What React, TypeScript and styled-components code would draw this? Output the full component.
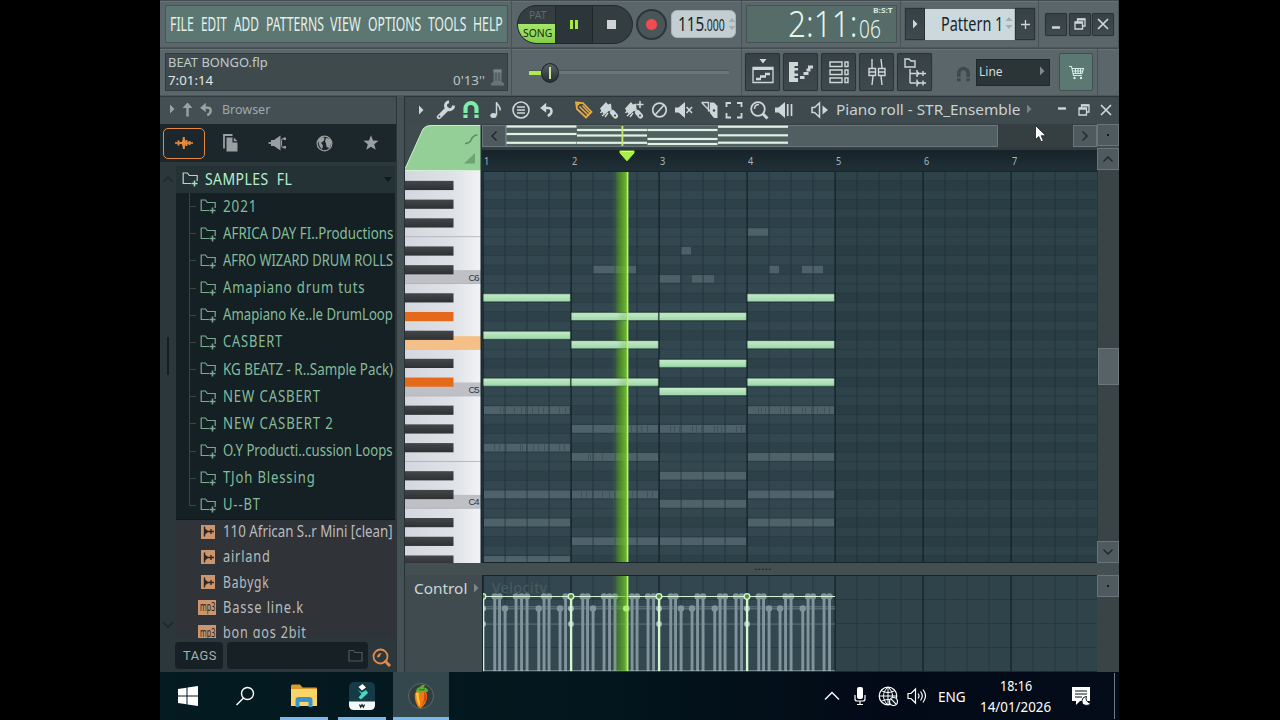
import { useLayoutEffect, useRef, useState } from "react";
import type { ReactNode } from "react";
import styled, { createGlobalStyle, css } from "styled-components";

const ui = `"Noto Sans", "Open Sans", sans-serif`;

/* ---------- fitted text ---------- */

type FitProps = {
  w: number;
  size: number;
  color?: string;
  weight?: number;
  spacing?: number;
  font?: string;
  children: string;
};

// Squeezes a line of text into a given width, the way the condensed skin font looks.
function Fit({ w, size, color = "#d5dcde", weight = 400, spacing = 0, font = ui, children }: FitProps) {
  const ref = useRef<HTMLSpanElement>(null);
  const [scale, setScale] = useState(1);

  useLayoutEffect(() => {
    if (ref.current) setScale(w / (ref.current.offsetWidth - spacing));
  }, [w, spacing, children]);

  return (
    <FitBox $w={w} $size={size} $color={color} $weight={weight} $spacing={spacing} $font={font}>
      <span ref={ref} style={{ transform: `scaleX(${scale})` }}>
        {children}
      </span>
    </FitBox>
  );
}

const FitBox = styled.span<{
  $w: number;
  $size: number;
  $color: string;
  $weight: number;
  $spacing: number;
  $font: string;
}>`
  display: block;
  flex: none;
  width: ${({ $w }) => $w}px;
  height: ${({ $size }) => $size}px;
  font: ${({ $weight, $size, $font }) => `${$weight} ${$size}px/${$size}px ${$font}`};
  letter-spacing: ${({ $spacing }) => $spacing}px;
  color: ${({ $color }) => $color};
  white-space: pre;

  span {
    display: inline-block;
    transform-origin: 0 50%;
  }
`;

/* ---------- icons ---------- */

type IconProps = { w?: number; h?: number; box?: string; color?: string; children: ReactNode };

function Icon({ w = 20, h = 20, box = "0 0 20 20", color = "#ced7d8", children }: IconProps) {
  return (
    <svg width={w} height={h} viewBox={box} fill="none" stroke={color} strokeWidth="1.7" color={color}>
      {children}
    </svg>
  );
}

const Right = ({ color = "#ced7d8" }: { color?: string }) => (
  <Icon w={6} h={10} box="0 0 6 10">
    <path d="M1 0.5L5.5 5L1 9.5z" fill={color} stroke="none" />
  </Icon>
);

const Undo = ({ color = "#ced7d8", size = 18 }: { color?: string; size?: number }) => (
  <Icon w={size} h={size} color={color}>
    <path d="M9 1L1.500 7.500l7.500 6z" fill="currentColor" stroke="none" />
    <path d="M7 7.500h4.500c5.500 0 5.500 7.500 -.5 10" strokeWidth="3.200" />
  </Icon>
);

const Magnet = ({ color, size = 20 }: { color: string; size?: number }) => (
  <Icon w={size} h={size} color={color}>
    <path d="M4.500 13V8.500a5.500 5.500 0 0 1 11 0V13" strokeWidth="4.200" />
    <path d="M2.400 14.500h4.200v3.500H2.400zM13.400 14.500h4.200v3.500h-4.200z" fill="currentColor" stroke="none" />
  </Icon>
);

const Brush = ({ plus }: { plus?: boolean }) => (
  <Icon>
    <path d="M1 8.500L7 2l2 2.500 3-1 .5 5-6 5.500L6 13l-1.500 1z" fill="currentColor" stroke="none" />
    <path d="M10.500 9l1.500 1.500" strokeWidth="3" />
    <path d="M13.500 12.500l3 3.500" strokeWidth="5" strokeLinecap="round" />
    <path d="M1.500 13l2.500-3M3 16l3.500-3M6 17l3-4" strokeWidth="1.400" />
    <circle cx="16" cy="15.500" r="1.100" fill="#3d494d" stroke="none" />
    {plus && <path d="M16 1v7M12.500 4.500h7" strokeWidth="1.500" />}
  </Icon>
);

const Speaker = () => <path d="M1 7.500h3.500L11 2v16l-6.500-5.500H1z" fill="currentColor" stroke="none" />;

const Restore = () => (
  <Icon w={12} h={12} box="0 0 12 12">
    <path d="M3.500 4V1h7.500v7H9M1 4h7.500v7H1z" strokeWidth="1.300" />
    <path d="M1 4.800h7.500M3.500 1.500h7.500" strokeWidth="2" />
  </Icon>
);

const Cross = () => (
  <Icon w={12} h={12} box="0 0 12 12">
    <path d="M1 1l10 10M11 1L1 11" strokeWidth="1.700" />
  </Icon>
);

const Folder = ({ color }: { color: string }) => (
  <Icon w={17} h={17} box="0 0 17 17" color={color}>
    <path d="M9 12.500H1.200V2h4.300l1.800 2.500h7.900v5.500" strokeWidth="1.200" />
    <path d="M12.500 9.500v6M9.500 12.500h6" strokeWidth="1.500" />
  </Icon>
);

const Chevron = ({ d, color = "#1c272b" }: { d: string; color?: string }) => (
  <Icon w={12} h={12} box="0 0 12 12" color={color}>
    <path d={d} strokeWidth="1.400" />
  </Icon>
);

const UP = "M1.500 8.500L6 4l4.500 4.500";
const DOWN = "M1.500 3.500L6 8l4.500-4.500";
const LEFT = "M8.500 1.500L4 6l4.500 4.500";
const RIGHT = "M3.500 1.500L8 6l-4.500 4.500";

const Stepper = () => (
  <Icon w={8} h={14} box="0 0 8 14">
    <path d="M0.500 5L4 1l3.500 4zM0.500 9L4 13l3.500-4z" fill="#a3afb3" stroke="none" />
  </Icon>
);

/* ---------- top toolbar ---------- */

const menus: [string, number][] = [
  ["FILE", 24],
  ["EDIT", 26],
  ["ADD", 25],
  ["PATTERNS", 58],
  ["VIEW", 31],
  ["OPTIONS", 53],
  ["TOOLS", 38],
  ["HELP", 30],
];

function MainBar() {
  return (
    <>
      <BarRow>
        <BarCell $w={352} $pad={5}>
          <MenuBox>
            {menus.map(([name, w]) => (
              <Fit key={name} w={w} size={20} color="#e3f1ec">
                {name}
              </Fit>
            ))}
          </MenuBox>
        </BarCell>
        <BarCell $w={230} $pad={5}>
          <Transport>
            <PatSong>
              <Pat>
                <Fit w={17} size={11} color="#5d6a6e">PAT</Fit>
              </Pat>
              <Song>
                <Fit w={29} size={11.500} color="#1c2a10">SONG</Fit>
              </Song>
            </PatSong>
            <Pause>
              <i />
              <i />
            </Pause>
            <StopCell>
              <i />
            </StopCell>
          </Transport>
          <Record />
          <Tempo>
            <Fit w={26} size={20} color="#1b2326">115</Fit>
            <Fit w={21} size={15.500} color="#1b2326">.000</Fit>
            <Stepper />
          </Tempo>
        </BarCell>
        <BarCell $w={159} $pad={4}>
          <TimeBox>
            <Fit w={69} size={37} weight={300} color="#e3f5ed">2:11:</Fit>
          </TimeBox>
          <TimeRight>
            <Fit w={20} size={7.500} weight={700} color="#d6e8e2">B:S:T</Fit>
            <Fit w={22} size={26} weight={300} color="#e3f5ed">06</Fit>
          </TimeRight>
        </BarCell>
        <BarCell $w={138} $pad={4}>
          <SideButton>
            <Right />
          </SideButton>
          <PatternName>
            <Fit w={62} size={20.500} color="#1c2529">Pattern 1</Fit>
            <Stepper />
          </PatternName>
          <SideButton>
            <Icon w={11} h={11} box="0 0 11 11">
              <path d="M5.500 1v9M1 5.500h9" strokeWidth="1.300" />
            </Icon>
          </SideButton>
        </BarCell>
        <BarCell $w={80} $pad={6}>
          <WinButtons>
            <WinButton>
              <Icon w={12} h={12} box="0 0 12 12">
                <path d="M2 9.500h8" strokeWidth="2.500" />
              </Icon>
            </WinButton>
            <WinButton>
              <Restore />
            </WinButton>
            <WinButton>
              <Cross />
            </WinButton>
          </WinButtons>
        </BarCell>
      </BarRow>
      <BarRow>
        <BarCell $w={352} $pad={5}>
          <InfoBox>
            <Fit w={100} size={12.500} color="#c0cacc">BEAT BONGO.flp</Fit>
            <InfoLine>
              <Fit w={45} size={13} color="#e0e7e8">7:01:14</Fit>
              <InfoTail>
                <Fit w={32} size={13} color="#b9c4c6">0'13''</Fit>
                <Icon w={15} h={19} box="0 0 15 19" color="#717c7f">
                  <path d="M3.500 1.500h8v12l2.500 2v2H1v-2l2.500-2z" fill="#687477" stroke="none" />
                  <path d="M6 4v9M9 4v9" stroke="#465255" strokeWidth="1" />
                  <path d="M3.500 1.500h8v3h-8z" stroke="none" fill="#7a8588" />
                </Icon>
              </InfoTail>
            </InfoLine>
          </InfoBox>
        </BarCell>
        <BarCell $w={230} $pad={17}>
          <Slider>
            <SliderFill />
            <Knob />
          </Slider>
        </BarCell>
        <BarCell $w={356} $pad={3}>
          <ToolButtons>
            <ToolButton>
              <Icon w={24} h={28} box="0 0 24 28">
                <path d="M8.500 1h7L12 5.500z" fill="currentColor" stroke="none" />
                <path d="M2 9.500h20v15H2z" strokeWidth="1.300" />
                <path d="M2 11h20" strokeWidth="2" />
                <path d="M5 21h5M9 18.500h6M14 16h5" strokeWidth="2.400" />
              </Icon>
            </ToolButton>
            <ToolButton>
              <Icon w={26} h={24} box="0 0 26 24">
                <path d="M1 2h9v4H6.500v2H10v2.500H6.500v3H10V16H6.500v2H10v4H1z" fill="currentColor" stroke="none" />
                <path d="M12 17.500h4.500M15.500 13.500h5M20 7h5M18.500 10h4" strokeWidth="3" />
              </Icon>
            </ToolButton>
            <ToolButton>
              <Icon w={22} h={26} box="0 0 22 26">
                <path
                  d="M2 3h12v4.500H2zM2 11h12v4.500H2zM2 19h12v4.500H2zM17 3h3v4.500h-3zM17 11h3v4.500h-3zM17 19h3v4.500h-3z"
                  strokeWidth="1.400"
                />
              </Icon>
            </ToolButton>
            <ToolButton>
              <Icon w={20} h={28} box="0 0 20 28">
                <path d="M5 1v9M6 18l-1 9M14 1l1 9M14 18l1 9M2 10.500h6.500v7H2zM11.500 10.500H18v7h-6.500z" strokeWidth="1.400" />
                <path d="M2 14h6.500M11.500 14H18" strokeWidth="1.700" />
              </Icon>
            </ToolButton>
            <ToolButton>
              <Icon w={26} h={30} box="0 0 26 30">
                <path d="M3 2h4l2 2h4v6H3zM8 12v14M8 16.500h6M8 26h6" strokeWidth="1.400" />
                <path d="M15 13v7M15 16.500h9M15 22.500v7M15 26h9M21 14v5M21 23.500v5" strokeWidth="1.400" />
                <path d="M15 14l3 2.500-3 2.500zM15 23.500l3 2.500-3 2.500z" fill="currentColor" stroke="none" />
              </Icon>
            </ToolButton>
          </ToolButtons>
          <Snap>
            <Magnet color="#3f494c" size={17} />
            <SnapSelect>
              <Fit w={24} size={13}>Line</Fit>
              <Right color="#7f8a8d" />
            </SnapSelect>
          </Snap>
          <CartButton>
            <Icon w={17} h={17} box="0 0 17 17" color="#d6ebe4">
              <path d="M1 2.500h2.500l2 9h8.500M4 4.500h11.500l-1.500 5H5M7.500 4.500v5M10 4.500v5M12.500 4.500v5M4.500 7h10" strokeWidth="1.100" />
              <circle cx="6.500" cy="14" r="1.200" fill="currentColor" stroke="none" />
              <circle cx="13" cy="14" r="1.200" fill="currentColor" stroke="none" />
            </Icon>
          </CartButton>
        </BarCell>
      </BarRow>
    </>
  );
}

/* ---------- browser ---------- */

const folders: [string, number, number?][] = [
  ["2021", 33, 1],
  ["AFRICA DAY FI..Productions", 170],
  ["AFRO WIZARD DRUM ROLLS", 170],
  ["Amapiano drum tuts", 142, 1],
  ["Amapiano Ke..le DrumLoop", 170],
  ["CASBERT", 59, 1],
  ["KG BEATZ - R..Sample Pack)", 170],
  ["NEW CASBERT", 97, 1],
  ["NEW CASBERT 2", 110, 1],
  ["O.Y Producti..cussion Loops", 170],
  ["TJoh Blessing", 92, 1],
  ["U--BT", 37, 1],
];

const files: [string, number, boolean][] = [
  ["110 African S..r Mini [clean]", 170, false],
  ["airland", 47, false],
  ["Babygk", 46, false],
  ["Basse line.k", 80, true],
  ["bon gos 2bit", 83, true],
];

function Browser() {
  return (
    <BrowserPane>
      <BrowserHead>
        <Right color="#98a3a4" />
        <Icon w={11} h={15} box="0 0 11 15" color="#98a3a4">
          <path d="M5.500 0.500L10.500 6H0.500z" fill="currentColor" stroke="none" />
          <path d="M5.500 5v9.500" strokeWidth="2.400" />
        </Icon>
        <Undo color="#98a3a4" size={15} />
        <Fit w={48} size={13} color="#9eaaab">Browser</Fit>
      </BrowserHead>
      <BrowserTabs>
        <BrowserTab $on>
          <Icon w={18} h={14} box="0 0 18 14" color="#e6883f">
            <path d="M0 7h18" strokeWidth="1.600" />
            <path d="M3.500 4.500v5M6 6v2M8.800 1v12M11.500 4v6M14.500 5v4" strokeWidth="2" />
            <path d="M8.800 1l2.500 6-2.500 6-2.500-6z" fill="currentColor" stroke="none" />
          </Icon>
        </BrowserTab>
        <BrowserTab>
          <Icon w={15} h={18} box="0 0 15 18" color="#9a9fa1">
            <path d="M1 14.500V1h8.500" strokeWidth="1.800" />
            <path d="M3.500 3.500h6V8.500h5V17.500h-11z" fill="currentColor" stroke="none" />
            <path d="M10.800 3.500l3.700 3.700h-3.700z" fill="currentColor" stroke="none" />
          </Icon>
        </BrowserTab>
        <BrowserTab>
          <Icon w={19} h={16} box="0 0 19 16" color="#9a9fa1">
            <path d="M3 5h3l6.500-4.500v15L6 11H3z" fill="currentColor" stroke="none" />
            <path d="M0.500 8h5" strokeWidth="1.800" />
            <path d="M17 3.500h-1.500q-2 0-2 2v5q0 2 2 2h1.500" strokeWidth="1" />
            <path d="M15.500 2.500h2.500v2.500h-2.500zM15.500 11h2.500v2.500h-2.500z" fill="currentColor" stroke="none" />
          </Icon>
        </BrowserTab>
        <BrowserTab>
          <Icon w={17} h={17} box="0 0 17 17" color="#9a9fa1">
            <circle cx="8.500" cy="8.500" r="7.300" strokeWidth="1.300" />
            <path d="M2 5l3-3 3.500.5-.5 3L5 8l2 2.500-1 4L3.500 11zM10 3l4.500 1 1 4-2 5-3-1-.5-3.500L9 6z" fill="currentColor" stroke="none" />
          </Icon>
        </BrowserTab>
        <BrowserTab>
          <Icon w={16} h={16} box="0 0 16 16">
            <path
              d="M8 0.300l2 5.300 5.600.2-4.400 3.500 1.500 5.500L8 11.700l-4.700 3.100 1.500-5.500L.4 5.800 6 5.600z"
              fill="#9a9fa1"
              stroke="none"
            />
          </Icon>
        </BrowserTab>
      </BrowserTabs>
      <BrowserBody>
        <Gutter>
          <Chevron d={UP} />
          <GutterMark />
          <Chevron d={DOWN} />
        </Gutter>
        <Tree>
          <RootRow>
            <Folder color="#a9dfc0" />
            <Fit w={87} size={16} color="#b5efce" spacing={0.500}>{"SAMPLES  FL"}</Fit>
            <Icon w={8} h={5} box="0 0 8 5">
              <path d="M0 0h8L4 5z" fill="#10191c" stroke="none" />
            </Icon>
          </RootRow>
          <FolderList>
            {folders.map(([name, w, spacing]) => (
              <FolderRow key={name}>
                <Folder color="#7bab8f" />
                <Fit w={w} size={15.500} color="#86bb9c" spacing={spacing}>
                  {name}
                </Fit>
              </FolderRow>
            ))}
          </FolderList>
          <FileList>
            {files.map(([name, w, mp3]) => (
              <FileRow key={name}>
                {mp3 ? (
                  <Mp3>
                    <Fit w={15} size={12} color="#2b2320">mp3</Fit>
                  </Mp3>
                ) : (
                  <WavIcon>
                    <Icon w={13} h={13} box="0 0 13 13" color="#33261f">
                      <path d="M2.500 1.500v10M2.500 6.500H12M9 4v5" strokeWidth="1.400" />
                      <path d="M2.500 3L6.500 6.500 2.500 10" fill="currentColor" stroke="none" />
                    </Icon>
                  </WavIcon>
                )}
                <Fit w={w} size={15.500} color="#b9bcbe" spacing={w < 170 ? 1 : 0}>
                  {name}
                </Fit>
              </FileRow>
            ))}
          </FileList>
        </Tree>
      </BrowserBody>
      <BrowserFoot>
        <TagsButton>
          <Fit w={33} size={13} color="#a7b1b2" font={`Roboto, sans-serif`} spacing={0.500}>TAGS</Fit>
        </TagsButton>
        <TagSearch>
          <Icon w={15} h={13} box="0 0 15 13" color="#4c585b">
            <path d="M1 1.500h4.500l1.500 2h7V12H1z" strokeWidth="1.200" />
          </Icon>
        </TagSearch>
        <Icon w={19} h={19} box="0 0 19 19" color="#e08a4b">
          <circle cx="8.500" cy="8.500" r="7" strokeWidth="1.800" />
          <path d="M12.500 12.500l5.500 5.500" strokeWidth="3" />
          <path d="M5 9.500C5 6.500 7 5 9.500 5L7.500 9z" fill="currentColor" stroke="none" />
        </Icon>
      </BrowserFoot>
    </BrowserPane>
  );
}

/* ---------- piano roll ---------- */

const ROW = 9.365;
const C5 = 391.500;
const BAR = 88;
const X0 = 483;
const PLAY = 627.800;
const BLACK = [1, 3, 6, 8, 10];

// Semitones are counted from C5; the y value is the centre of the row.
const rowY = (n: number) => C5 - n * ROW;
const barX = (bar: number) => X0 + bar * BAR;

const rows = Array.from({ length: 43 }, (_, i) => i - 19);
const isBlack = (n: number) => BLACK.includes((n + 48) % 12);

const chords = [
  [10, 6, 1],
  [8, 5, 1],
  [8, 3, 0],
  [10, 5, 1],
];

const ghosts = [
  [-2, -6, -11, -14, -18],
  [-4, -7, -11, -16],
  [-4, -9, -12, -16],
  [-2, -7, -11, -14],
];

const strays: [number, number, number][] = [
  [593, 43, 13],
  [659, 21, 12],
  [681, 10, 15],
  [692, 22, 12],
  [748, 20, 17],
  [769, 10, 13],
  [802, 21, 13],
];

// rows whose ghost notes are made of short hits: bar, semitone, tick offsets
const hits: [number, number, number[]][] = [
  [0, -2, [17, 20, 31, 38, 42, 49, 55, 60, 66, 76, 82, 86]],
  [0, -6, [11, 16, 23, 37, 39, 43, 50, 55, 61, 65, 76, 81]],
  [1, -4, [54, 60, 70, 76]],
  [1, -7, [17, 19, 31]],
  [1, -11, [10, 15, 21, 31, 38, 43, 55, 61, 76, 81]],
  [2, -4, [11, 15, 20, 33, 37, 42, 55, 58, 62, 77, 82, 86]],
  [3, -2, [11, 14, 18, 33, 37, 41, 55, 58, 64, 70, 77, 82]],
];

function NoteGrid() {
  return (
    <svg width="615" height="392" viewBox="482 171 615 392">
      <defs>
        <linearGradient id="glow">
          <stop offset="0" stopColor="#5fb31c" stopOpacity="0" />
          <stop offset="0.5" stopColor="#5fb31c" stopOpacity="0.550" />
          <stop offset="1" stopColor="#78cc2c" stopOpacity="0.900" />
        </linearGradient>
        <linearGradient id="note" x2="0" y2="1">
          <stop offset="0" stopColor="#c6ecca" />
          <stop offset="1" stopColor="#9bd6a8" />
        </linearGradient>
      </defs>
      <rect x="482" y="171" width="615" height="392" fill="#32474f" />
      {rows.map((n) => (
        <g key={n}>
          {isBlack(n) && <rect x="482" y={rowY(n) - ROW / 2} width="615" height={ROW} fill="#2d4149" />}
          <rect x="482" y={rowY(n) + ROW / 2 - 0.500} width="615" height="0.800" fill="#2a3d45" />
        </g>
      ))}
      <rect x="835" y="171" width="262" height="392" fill="#1b2f38" opacity="0.180" />
      {ghosts.map((bar, b) =>
        bar.map((n) => (
          <rect key={`${b}${n}`} x={barX(b) + 1} y={rowY(n) - 4} width="86" height="7.800" fill="#4e6269" />
        ))
      )}
      {strays.map(([x, w, n]) => (
        <rect key={x} x={x} y={rowY(n) - 4} width={w} height="7.500" fill="#4d6168" />
      ))}
      {hits.map(([b, n, ticks]) =>
        ticks.map((t) => <rect key={`${b}${n}${t}`} x={barX(b) + t} y={rowY(n) - 3} width="1" height="6" fill="#3e525a" />)
      )}
      {Array.from({ length: 28 }, (_, i) => (
        <rect
          key={i}
          x={X0 + i * 22 - 0.500}
          y="171"
          width="1.200"
          height="392"
          fill={i % 4 ? "#1f3138" : "#0f1c21"}
          opacity={i % 4 ? 0.600 : 0.900}
        />
      ))}
      <rect x="612" y="171" width="16" height="392" fill="url(#glow)" />
      {chords.map((bar, b) =>
        bar.map((n) => (
          <rect
            key={`${b}${n}`}
            x={barX(b) + 0.200}
            y={rowY(n) - 4}
            width="87.200"
            height="8"
            rx="0.800"
            fill="url(#note)"
            stroke="#23382f"
            strokeWidth="0.500"
          />
        ))
      )}
      <rect x="617" y="171" width="10" height="392" fill="url(#glow)" opacity="0.350" />
      <rect x={PLAY - 1} y="171" width="1.600" height="392" fill="#b9f763" />
      <path d="M482 171.500h615M482 562.500h615" stroke="#17252a" />
    </svg>
  );
}

const sounding: Record<number, string> = { 8: "#e5691b", 1: "#e5691b" };

function Keyboard() {
  return (
    <svg width="77" height="392" viewBox="405 171 77 392">
      <defs>
        <linearGradient id="white">
          <stop offset="0" stopColor="#d4d8de" />
          <stop offset="0.65" stopColor="#dfe2e7" />
          <stop offset="1" stopColor="#f2f3f6" />
        </linearGradient>
        <linearGradient id="black" x2="0" y2="1">
          <stop offset="0" stopColor="#44464a" />
          <stop offset="1" stopColor="#2e3033" />
        </linearGradient>
      </defs>
      <rect x="405" y="171" width="76" height="392" fill="url(#white)" />
      {[12, 0, -12].map((n) => (
        <g key={n}>
          <rect x="405" y={rowY(n) - 9} width="76" height="13.200" fill="#bfc0c5" />
          <path d={`M405 ${rowY(n) + 4.400}h76M405 ${rowY(n - 7) + 4.400}h76`} stroke="#a9acb3" strokeWidth="0.800" />
        </g>
      ))}
      <path d={`M405 ${rowY(17) + 4.400}h76`} stroke="#a9acb3" strokeWidth="0.800" />
      <rect x="405" y={rowY(5) - 8.500} width="76" height="13.500" fill="#f4c088" />
      {rows.filter(isBlack).map((n) => (
        <rect key={n} x="405" y={rowY(n) - 4.600} width="48.500" height="9.200" fill={sounding[n] ?? "url(#black)"} />
      ))}
      {[12, 0, -12].map((n, i) => (
        <text key={n} x="468.500" y={rowY(n) + 1.600} fontFamily="Liberation Sans, sans-serif" fontSize="9.500" textLength="11" fill="#33373b">
          {["C6", "C5", "C4"][i]}
        </text>
      ))}
      <rect x="480.500" y="171" width="1.500" height="392" fill="#1d282b" />
    </svg>
  );
}

const stems = [11.700, 16.500, 22, 33, 38.500, 44, 55.700, 61, 66, 77, 82.500];
const soft = [
  [22, 55.700, 77],
  [22, 55.700],
  [22, 33, 55.700],
  [22, 33, 55.700],
];

function Velocity() {
  return (
    <svg width="615" height="97" viewBox="482 575 615 97">
      <rect x="482" y="575" width="615" height="97" fill="#32474f" />
      <rect x="835" y="575" width="262" height="97" fill="#2f434b" />
      <path d="M482 599.500h615M482 623.500h615M482 647.500h615" stroke="#243840" strokeWidth="0.800" />
      {Array.from({ length: 28 }, (_, i) => (
        <rect key={i} x={X0 + i * 22 - 0.500} y="575" width="1.100" height="97" fill={i % 4 ? "#22343b" : "#0f1c21"} opacity={i % 4 ? 0.600 : 1} />
      ))}
      <text x="492" y="593" fontFamily="Noto Sans, sans-serif" fontSize="14" textLength="55" fill="#4a5d64">
        Velocity
      </text>
      <path d="M483 606.800h352M483 608.800h352M483 624h352" stroke="#74898f" strokeWidth="0.800" />
      {soft.map((low, b) =>
        stems.map((s) => {
          const y = low.includes(s) ? 608.500 : 596.500;
          return (
            <g key={`${b}-${s}`} fill="#80959b">
              <rect x={barX(b) + s - 1.400} y={y} width="2.900" height="75.500" />
              <circle cx={barX(b) + s} cy={y} r="3.200" />
            </g>
          );
        })
      )}
      <rect x="482" y="670.500" width="353" height="1" fill="#a9bcbc" />
      <path d="M483 596.500h352" stroke="#d6f5d6" strokeWidth="1.200" />
      <rect x="612" y="575" width="16" height="97" fill="url(#glow)" />
      {[0, 1, 2, 3].map((b) => (
        <g key={b}>
          <circle cx={barX(b)} cy="608.500" r="3" fill="#9db3b3" />
          <circle cx={barX(b)} cy="624" r="3" fill="#9db3b3" />
          <rect x={barX(b) - 1.100} y="597" width="2.400" height="75" fill="#d3f7d2" />
          <circle cx={barX(b)} cy="596.500" r="2.800" fill="#50903f" stroke="#d6f5d6" strokeWidth="1.300" />
        </g>
      ))}
      <circle cx="626" cy="608.500" r="3" fill="#a8f07a" />
      <rect x={PLAY - 1} y="575" width="1.600" height="97" fill="#b9f763" />
      <path d="M482 575.500h615M482.500 575v97M482 671.700h615" stroke="#17252a" />
    </svg>
  );
}

// strip above the ruler: one list of line heights for each bar
const strip = [
  [126.500, 134, 142.800],
  [130, 135.500, 142.800],
  [130, 139, 144],
  [126.700, 135.300, 142.700],
];

function Overview() {
  return (
    <svg width="492" height="22" viewBox="506 125 492 22">
      <rect x="506" y="125" width="492" height="22" fill="#515f63" />
      <rect x="506" y="125" width="282" height="22" fill="#50645f" opacity="0.600" />
      <rect x="506.500" y="125.500" width="491" height="21" fill="none" stroke="#707d80" strokeWidth="0.800" />
      {strip.map((lines, b) =>
        lines.map((y) => <rect key={`${b}${y}`} x={506.500 + b * 70.500} y={y - 1.100} width="70" height="2.200" fill="#e2f1e4" />)
      )}
      <rect x="621.500" y="126" width="1.800" height="20" fill="#c9ea68" />
    </svg>
  );
}

function RollTools() {
  return (
    <RollBar>
      <Slot><Right /></Slot>
      <Slot>
        <Icon>
          <path d="M3 17L11 9" strokeWidth="4.400" strokeLinecap="round" />
          <path d="M17.500 5.500a4 4 0 1 1 -4.500 -3.700" strokeWidth="3" />
          <circle cx="3.500" cy="16.500" r="0.900" fill="#3d494d" stroke="none" />
        </Icon>
      </Slot>
      <Slot><Magnet color="#7fecaa" /></Slot>
      <Slot>
        <Icon>
          <path d="M10.500 15V2c.5 3.500 4.500 4 3.500 8.500" strokeWidth="1.500" />
          <ellipse cx="7.500" cy="15.500" rx="3.200" ry="2.500" fill="currentColor" stroke="none" />
        </Icon>
      </Slot>
      <Slot $w={26}>
        <Icon>
          <circle cx="10" cy="10" r="8" strokeWidth="1.600" />
          <path d="M6 7h8M6 10h8M6 13h8" strokeWidth="1.500" />
        </Icon>
      </Slot>
      <Slot><Undo size={16} /></Slot>
      <Slot $gap={12}>
        <Icon color="#e9a83e">
          <path d="M2 2.500l7 0.500 8.500 9-5.500 5.500L3 9z" strokeWidth="1.800" />
          <path d="M5.500 6.500l8.500 8.500M8.500 5.500l7 7.500" strokeWidth="1.500" />
          <path d="M2 2.500h5L2.500 7.500z" fill="currentColor" stroke="none" />
        </Icon>
      </Slot>
      <Slot><Brush /></Slot>
      <Slot><Brush plus /></Slot>
      <Slot>
        <Icon>
          <circle cx="10.500" cy="10" r="6.800" />
          <path d="M6 15L15 5" />
        </Icon>
      </Slot>
      <Slot $w={26}>
        <Icon>
          <Speaker />
          <path d="M12.500 7l5.500 6M18 7l-5.500 6" strokeWidth="1.500" />
        </Icon>
      </Slot>
      <Slot>
        <Icon>
          <path d="M1.500 2.500h7v9M2 3l10 10" strokeWidth="1.400" />
          <path d="M10 2.500h4l3.500 3.500v12h-3.500L10 13z" fill="currentColor" stroke="none" />
          <circle cx="14" cy="10.500" r="1.200" fill="#3d494d" stroke="none" />
        </Icon>
      </Slot>
      <Slot $w={24}>
        <Icon>
          <path d="M2.500 7V3H7M13 3h4.500v4M17.500 13v4.500H13M7 17.500H2.500V13" strokeWidth="1.800" />
        </Icon>
      </Slot>
      <Slot>
        <Icon>
          <circle cx="9" cy="9" r="6.800" strokeWidth="1.800" />
          <path d="M13.500 13.500l5 5" strokeWidth="3" />
          <path d="M5.500 9c0-3 2-4.500 4.500-4.500" strokeWidth="1.500" />
        </Icon>
      </Slot>
      <Slot>
        <Icon>
          <Speaker />
          <path d="M13.700 4v12M17.500 4v12" strokeWidth="1.700" />
        </Icon>
      </Slot>
      <Slot $gap={11}>
        <Icon>
          <path d="M2 7.500h2.500L9.500 3v14l-5-4.500H2z" strokeWidth="1.500" />
          <path d="M12.500 5.500L18 10l-5.500 4.500z" fill="currentColor" stroke="none" />
        </Icon>
      </Slot>
      <RollTitle>
        <Fit w={184} size={14.500} color="#c9d2d3">Piano roll - STR_Ensemble</Fit>
        <Right color="#778386" />
      </RollTitle>
      <RollWin>
        <Icon w={12} h={12} box="0 0 12 12">
          <path d="M2 4.500h8" strokeWidth="2.400" />
        </Icon>
        <Restore />
        <Cross />
      </RollWin>
    </RollBar>
  );
}

function PianoRoll() {
  return (
    <Roll>
      <RollTools />
      <RollBody>
        <Corner>
          <svg width="77" height="47" viewBox="405 124 77 47">
            <path d="M405 171v-3L423 129q3-4 8-4h50v46z" fill="#93cf96" />
            <path d="M405.500 168L423 129q3-3.500 8-3.500h50" stroke="#c4ebc5" fill="none" />
            <path d="M405 170.500h76" stroke="#d5efd5" />
            <path d="M465 143.500c9 0 4-8.500 12.500-8.500" stroke="#5c8e60" strokeWidth="1.600" fill="none" />
            <path d="M464 163.500h11V153z" fill="#6fa274" />
            <rect x="480.500" y="125" width="1.500" height="46" fill="#24312f" />
          </svg>
        </Corner>
        <HScroll>
          <ScrollButton $w={24}><Chevron d={LEFT} /></ScrollButton>
          <Overview />
          <ScrollTrack />
          <ScrollButton $w={24}><Chevron d={RIGHT} /></ScrollButton>
        </HScroll>
        <ScrollButton $w={22}><Dot /></ScrollButton>
        <Ruler>
          {["1", "2", "3", "4", "5", "6", "7"].map((n) => (
            <Tick key={n}>
              <Fit w={5} size={11} color="#a9b6b8">{n}</Fit>
            </Tick>
          ))}
          <PlayMarker width="18" height="14" viewBox="0 0 18 14">
            <path d="M1 1h16v3l-8 9-8-9z" fill="#a8ef49" stroke="#1b2a12" />
            <path d="M3 2.500h12" stroke="#d6ff8f" />
          </PlayMarker>
        </Ruler>
        <VScroll>
          <ScrollButton $w={22}><Chevron d={UP} /></ScrollButton>
          <VTrack>
            <VThumb />
          </VTrack>
          <ScrollButton $w={22}><Chevron d={DOWN} /></ScrollButton>
        </VScroll>
        <Keyboard />
        <NoteGrid />
        <Splitter>
          <Fit w={17} size={8} color="#1f2b2e" weight={700}>.....</Fit>
        </Splitter>
        <ControlCell>
          <Fit w={53} size={14.500} color="#cdd6d7">Control</Fit>
          <Right color="#7c888a" />
        </ControlCell>
        <Velocity />
        <ControlScroll>
          <ScrollButton $w={22}><Dot /></ScrollButton>
        </ControlScroll>
      </RollBody>
    </Roll>
  );
}

/* ---------- taskbar ---------- */

function Taskbar() {
  return (
    <TaskRow>
      <TaskItem $w={56}>
        <svg width="20" height="20" viewBox="0 0 20 20" fill="#fff">
          <path d="M0 3l8.500-1.200v7.700H0zM9.500 1.600L20 0v9.500H9.500zM0 10.500h8.500v7.700L0 17zM9.500 10.500H20V20L9.500 18.400z" />
        </svg>
      </TaskItem>
      <TaskItem $w={57}>
        <Icon color="#fff">
          <circle cx="12.500" cy="7.500" r="6" strokeWidth="1.400" />
          <path d="M8.500 12L1.500 19" strokeWidth="1.400" />
        </Icon>
      </TaskItem>
      <TaskItem $w={62} $line={48}>
        <svg width="26" height="24" viewBox="0 0 26 24">
          <path d="M0 2q0-1.500 1.500-1.500H9l2.500 3H25q1 0 1 1V21H0z" fill="#d89a2b" />
          <path d="M0 5h26v17H0z" fill="#f9d568" />
          <path d="M4.500 23v-7q0-3 3-3h11q3 0 3 3v7h-4v-5h-9v5z" fill="#3a93c9" />
        </svg>
      </TaskItem>
      <TaskItem $w={54} $line={48}>
        <svg width="26" height="28" viewBox="0 0 26 28">
          <rect width="26" height="27" rx="5" fill="#153a48" />
          <path d="M0 19.500h26V23q0 5-5 5H5q-5 0-5-5z" fill="#f4f7f8" />
          <path d="M9.500 5l4-3L17 5.500l-4 3z" fill="#fff" />
          <path d="M9 8l4 2.500L17 8l2 3-7 6.500-2.500-2 3-3.500z" fill="#41dcc0" />
          <path d="M10.500 22.500l1.200 2.500L13 22.800l1.300 2.200 1.200-2.500" stroke="#15262e" strokeWidth="1.300" fill="none" />
        </svg>
      </TaskItem>
      <TaskItem $w={56} $line={56} $gap={4} $active>
        <svg width="28" height="28" viewBox="0 0 28 28">
          <circle cx="14" cy="14" r="12.500" fill="#343d3e" stroke="#5d686a" />
          <path d="M8 11q3-3 8-2 5 1 4 7-1 6-6 10-2 1-4-3-3-6-2-12z" fill="#f07a14" />
          <path d="M9 11q0 7 3 13 1.500 0 1-4-2-6-1-10z" fill="#fcc63c" />
          <path d="M17 10q4 3 2 8l-4 6q3-7 2-14z" fill="#d6430f" />
          <path d="M9 10q0-4 4-5 2-3 5-2l-1.500 2.500q4.500 0 4.500 4l-3 1-2-2-3 2.500z" fill="#5fae33" />
          <path d="M12 7.500l3 .5 3-1" stroke="#2e6d1c" fill="none" />
        </svg>
      </TaskItem>
      <Tray>
        <Icon w={16} h={16} box="0 0 16 16" color="#fff">
          <path d="M1 11.500L8 4.500l7 7" strokeWidth="1.300" />
        </Icon>
        <Icon w={12} h={20} box="0 0 12 20" color="#fff">
          <rect x="3" y="1" width="6" height="12" rx="2" fill="currentColor" stroke="none" />
          <path d="M1 9v4q0 2 2 2h6q2 0 2-2V9M6 15v4M3 18.500h6" strokeWidth="1.200" />
        </Icon>
        <Icon color="#fff">
          <circle cx="10" cy="10" r="8.800" strokeWidth="1.200" />
          <path d="M10 1v18M1 10h18M3 4.500q7 4 14 0M3 15.500q7-4 14 0M10 1C4 6 4 14 10 19M10 1c6 5 6 13 0 18" strokeWidth="1" />
          <circle cx="15.500" cy="15.500" r="4" fill="#04151c" strokeWidth="1.200" />
          <path d="M12.700 12.700l5.600 5.600" strokeWidth="1.200" />
        </Icon>
        <Icon color="#fff">
          <path d="M1 7.500h3L8.500 3v14L4 12.500H1z" strokeWidth="1.200" />
          <path d="M11 7.500q2 2.500 0 5M13.500 5.500q3.500 4.500 0 9M16 3.500q5 6.500 0 13" strokeWidth="1.200" />
        </Icon>
        <Fit w={28} size={14.500} color="#fff">ENG</Fit>
        <Clock>
          <Fit w={32} size={14.500} color="#fff">18:16</Fit>
          <Fit w={71} size={14.500} color="#fff">14/01/2026</Fit>
        </Clock>
        <Icon w={20} h={21} box="0 0 20 21" color="#fff">
          <path d="M1 1h18v14H9l-4 4v-4H1z" fill="currentColor" stroke="none" />
          <path d="M4 5h12M4 8h12M4 11h7" stroke="#05131c" strokeWidth="1.100" />
          <path d="M15.500 10.500a4.500 4.500 0 1 0 4 6.500a4.500 4.500 0 0 1 -4 -6.500z" stroke="#05131c" strokeWidth="1" fill="#fff" />
        </Icon>
        <ShowDesktop />
      </Tray>
    </TaskRow>
  );
}

export default function App() {
  return (
    <Stage>
      <Reset />
      <Screen>
        <MainBar />
        <Work>
          <Browser />
          <Divider />
          <PianoRoll />
        </Work>
        <Taskbar />
        <Cursor width="12" height="18" viewBox="0 0 12 18">
          <path d="M0.500 0.500v14l3.300-3 2.200 5.200 2.400-1-2.200-5h4.600z" fill="#fff" stroke="#1a2022" strokeWidth="0.800" />
        </Cursor>
      </Screen>
    </Stage>
  );
}

/* ---------- styles ---------- */

const Reset = createGlobalStyle`
  * { box-sizing: border-box; }
  body { margin: 0; background: #000; overflow: hidden; }
  svg { display: block; flex: none; }
`;

const Stage = styled.div`
  width: 1280px;
  height: 720px;
  padding-left: 160px;
  background: #000;
  font-family: ${ui};
`;

const Screen = styled.div`
  position: relative;
  display: flex;
  flex-direction: column;
  width: 959px;
  height: 720px;
  background: #3f4b4e;
`;

const BarRow = styled.div`
  display: flex;
  height: 48px;
  background: #5a6669;
  border-top: 1px solid #434e51;
  border-bottom: 1px solid #4b5659;
  box-shadow: inset 0 1px #667275;
`;

const BarCell = styled.div<{ $w: number; $pad: number }>`
  display: flex;
  align-items: center;
  flex: none;
  width: ${({ $w }) => $w}px;
  padding-left: ${({ $pad }) => $pad}px;
  border-right: 1px solid #475255;
`;

const MenuBox = styled.div`
  display: flex;
  align-items: center;
  justify-content: space-between;
  width: 343px;
  height: 38px;
  padding: 0 4px 0 4px;
  background: #5c7772;
  border: 1px solid #465855;
`;

const recess = css`
  background: linear-gradient(#39444880, #48545880), #353f43;
  border: 1px solid #2a3437;
  box-shadow: 0 0 1px #2a3437;
`;

const Transport = styled.div`
  display: flex;
  flex: none;
  width: 116px;
  height: 39px;
  overflow: hidden;
  border: 1px solid #20292b;
  border-radius: 20px;
  background: #343e41;
`;

const PatSong = styled.div`
  width: 38px;
  border-right: 1px solid #1f282a;
`;

const Pat = styled.div`
  display: flex;
  align-items: center;
  justify-content: center;
  height: 18px;
  padding-left: 2px;
`;

const Song = styled(Pat)`
  height: 19px;
  background: linear-gradient(#a4e56b, #86cf45);
`;

const Pause = styled.div`
  display: flex;
  align-items: center;
  justify-content: center;
  gap: 2px;
  width: 37px;
  background: #2c3538;
  border-right: 1px solid #1f282a;

  i {
    width: 3px;
    height: 9px;
    background: #a5ea3f;
  }
`;

const StopCell = styled.div`
  display: flex;
  align-items: center;
  justify-content: center;
  width: 37px;

  i {
    width: 9px;
    height: 9px;
    background: #ced4d8;
  }
`;

const Record = styled.div`
  flex: none;
  width: 31px;
  height: 31px;
  margin-left: 3px;
  border-radius: 50%;
  border: 2px solid #2c3639;
  background: radial-gradient(circle, #f04b50 0 5px, #4a5558 6px);
`;

const Tempo = styled.div`
  display: flex;
  align-items: center;
  flex: none;
  width: 65px;
  height: 28px;
  margin-left: 4px;
  padding-left: 6px;
  background: #c3ced2;
  border: 1px solid #aab5b9;
  border-radius: 6px;

  span + span {
    margin: 3px 3px 0 0;
  }
`;

const TimeBox = styled.div`
  display: flex;
  align-items: center;
  flex: none;
  width: 113px;
  height: 38px;
  padding: 0 0 3px 41px;
  background: #566c68;
  border: 1px solid #43534f;
  border-right: 0;
`;

const TimeRight = styled.div`
  display: flex;
  flex-direction: column;
  align-items: flex-end;
  flex: none;
  width: 38px;
  height: 38px;
  padding: 1px 3px 0 0;
  background: #566c68;
  border: 1px solid #43534f;
  border-left: 0;

  > span + span {
    margin: 0 12px 0 0;
  }
`;

const SideButton = styled.div`
  display: flex;
  align-items: center;
  justify-content: center;
  flex: none;
  width: 20px;
  height: 32px;
  ${recess}
`;

const PatternName = styled.div`
  display: flex;
  align-items: center;
  justify-content: flex-end;
  gap: 2px;
  flex: none;
  width: 90px;
  height: 31px;
  padding: 0 2px 2px 0;
  background: #cbd8dc;
`;

const WinButtons = styled.div`
  display: flex;
  gap: 1.500px;
`;

const WinButton = styled.div`
  display: flex;
  align-items: center;
  justify-content: center;
  width: 22px;
  height: 23px;
  border-radius: 2px;
  ${recess}
`;

const InfoBox = styled.div`
  display: flex;
  flex-direction: column;
  gap: 4px;
  width: 343px;
  height: 38px;
  padding: 3px 3px 0 2px;
  background: #3f4a4d;
  border: 1px solid #323c3f;
`;

const InfoLine = styled.div`
  display: flex;
  justify-content: space-between;
`;

const InfoTail = styled.div`
  display: flex;
  align-items: flex-end;
  gap: 5px;

  svg {
    margin: -8px -1px 0 0;
  }
`;

const Slider = styled.div`
  display: flex;
  align-items: center;
  width: 200px;
  height: 4px;
  background: #6a7679;
  border-top: 1px solid #4d585b;
`;

const SliderFill = styled.div`
  width: 12px;
  height: 4px;
  background: #b0e954;
`;

const Knob = styled.div`
  width: 18px;
  height: 20px;
  border-radius: 50%;
  border: 1px solid #1f2729;
  background:
    linear-gradient(90deg, transparent 7px, #c8e39c 7px 9px, transparent 9px) center / 100% 12px no-repeat,
    linear-gradient(#566165, #262f32);
`;

const ToolButtons = styled.div`
  display: flex;
  gap: 3px;
`;

const ToolButton = styled.div`
  display: flex;
  align-items: center;
  justify-content: center;
  width: 35px;
  height: 38px;
  border-radius: 2px;
  ${recess}
`;

const Snap = styled.div`
  display: flex;
  align-items: center;
  gap: 4px;
  margin-left: 23px;

  > svg {
    margin-top: 4px;
  }
`;

const SnapSelect = styled.div`
  display: flex;
  align-items: center;
  justify-content: space-between;
  width: 74px;
  height: 27px;
  padding: 0 4px 2px 2px;
  background: #2b3437;
  border: 1px solid #1f282a;
`;

const CartButton = styled.div`
  display: flex;
  align-items: center;
  justify-content: center;
  width: 34px;
  height: 38px;
  margin-left: 9px;
  background: #5b7873;
  border: 1px solid #40504d;
  border-radius: 2px;
`;

const Work = styled.div`
  display: flex;
  height: 576px;
`;

const BrowserPane = styled.div`
  display: flex;
  flex-direction: column;
  width: 236px;
  background: #2b373a;
`;

const BrowserHead = styled.div`
  display: flex;
  align-items: center;
  gap: 7px;
  height: 28px;
  padding: 0 0 3px 9px;
  background: #434f52;
  border-top: 1px solid #313b3e;

  svg:nth-child(3) {
    margin: 0 1px 0 -1px;
  }
`;

const BrowserTabs = styled.div`
  display: flex;
  align-items: center;
  justify-content: space-between;
  height: 38px;
  padding: 0 4px 0 3px;
  background: #1b272b;
`;

const BrowserTab = styled.div<{ $on?: boolean }>`
  display: flex;
  align-items: center;
  justify-content: center;
  width: 42px;
  height: 31px;
  border-radius: 5px;
  border: 1.500px solid ${({ $on }) => ($on ? "#e6883f" : "transparent")};
`;

const BrowserBody = styled.div`
  display: flex;
  height: 476px;
  padding-top: 4px;
`;

const Gutter = styled.div`
  display: flex;
  flex-direction: column;
  align-items: center;
  justify-content: space-between;
  width: 16px;
  padding: 7px 0;
`;

const GutterMark = styled.div`
  width: 2px;
  height: 38px;
  margin-top: -92px;
  background: #141d20;
`;

const Tree = styled.div`
  display: flex;
  flex-direction: column;
  width: 219px;
  overflow: hidden;
`;

const RootRow = styled.div`
  display: flex;
  align-items: center;
  flex: none;
  gap: 6px;
  height: 27px;
  padding: 0 3px 2px 6px;
  background: #243135;

  svg {
    margin-top: 2px;
  }

  svg:last-child {
    margin-left: auto;
  }
`;

const FolderList = styled.div`
  flex: none;
  padding-left: 13px;
  background: #142024;
`;

const FolderRow = styled.div`
  display: flex;
  align-items: center;
  gap: 6px;
  height: 27.180px;
  padding: 0 0 0.500px 9.500px;
  border-left: 1px solid #3a4548;
  background: linear-gradient(#3a4548, #3a4548) 0 50% / 6px 1px no-repeat;

  svg {
    margin-top: 1px;
  }

  &:last-child {
    border-image: linear-gradient(#3a4548 50%, transparent 50%) 1;
  }
`;

const FileList = styled.div`
  flex: none;
  background: #303338;
  border-top: 1px solid #10181a;
`;

const FileRow = styled.div`
  display: flex;
  align-items: center;
  gap: 7px;
  height: 25.200px;
  padding: 0 0 1.500px 22px;
`;

const WavIcon = styled.div`
  display: flex;
  align-items: center;
  justify-content: center;
  width: 14px;
  height: 14px;
  margin: 0 1px 0 3px;
  background: #c9966f;
`;

const Mp3 = styled.div`
  display: flex;
  align-items: center;
  justify-content: center;
  width: 18px;
  height: 15px;
  background: #c9966f;
`;

const BrowserFoot = styled.div`
  display: flex;
  align-items: center;
  gap: 4px;
  height: 34px;
  padding: 0 0 0 15px;

  > svg {
    margin-top: 4px;
  }
`;

const TagsButton = styled.div`
  display: flex;
  align-items: center;
  justify-content: center;
  width: 48px;
  height: 27px;
  border-radius: 4px;
  background: #172125;
`;

const TagSearch = styled(TagsButton)`
  justify-content: flex-end;
  width: 141px;
  padding-right: 5px;
`;

const Divider = styled.div`
  width: 9px;
  background: #455154;
  border-left: 1px solid #2a3537;
  border-right: 1px solid #273234;
`;

const Roll = styled.div`
  width: 714px;
`;

const RollBar = styled.div`
  display: flex;
  align-items: center;
  height: 28px;
  padding: 0 0 2px 3px;
  background: #3e4a4e;
  border-top: 1px solid #2c3639;
`;

const Slot = styled.div<{ $w?: number; $gap?: number }>`
  display: flex;
  align-items: center;
  justify-content: center;
  flex: none;
  width: ${({ $w = 25 }) => $w}px;
  margin-left: ${({ $gap = 0 }) => $gap}px;
`;

const RollTitle = styled.div`
  display: flex;
  align-items: center;
  gap: 6px;
  margin-left: 4px;
  padding-bottom: 1px;
`;

const RollWin = styled.div`
  display: flex;
  gap: 10px;
  margin: 0 7px 0 auto;
`;

const RollBody = styled.div`
  display: grid;
  grid-template-columns: 77px 615px 22px;
  grid-template-rows: 24px 23px 392px 12px 97px;
  background: #3f4b4e;
`;

const Corner = styled.div`
  grid-row: span 2;
  background: #3f4b4e;
`;

const HScroll = styled.div`
  display: flex;
  padding: 1px 0;
  background: #353f42;
`;

const ScrollButton = styled.div<{ $w: number }>`
  display: flex;
  align-items: center;
  justify-content: center;
  flex: none;
  width: ${({ $w }) => $w}px;
  height: 22px;
  background: #4e5a5d;
  border: 1px solid #69757a;
`;

const ScrollTrack = styled.div`
  flex: 1;
`;

const Dot = styled.i`
  width: 2px;
  height: 2px;
  background: #141c1f;
`;

const Ruler = styled.div`
  position: relative;
  display: flex;
  padding-left: 1.500px;
  overflow: hidden;
  background: linear-gradient(#16232a, #213036);
  border-top: 2px solid #303b3e;
`;

const Tick = styled.div`
  flex: none;
  width: 88px;
  padding-top: 5px;
`;

const PlayMarker = styled.svg`
  position: absolute;
  left: 136px;
  top: -1px;
`;

const VScroll = styled.div`
  grid-column: 3;
  grid-row: 2 / 4;
  display: flex;
  flex-direction: column;
  background: #3a4446;
`;

const VTrack = styled.div`
  flex: 1;
  padding-top: 178px;
  border-left: 1px solid #2b3538;
`;

const VThumb = styled.div`
  height: 37px;
  background: #566265;
  border: 1px solid #6b777a;
`;

const Splitter = styled.div`
  grid-column: 1 / -1;
  display: flex;
  justify-content: center;
  background: #434f51;
`;

const ControlCell = styled.div`
  display: flex;
  align-items: center;
  align-self: start;
  gap: 6px;
  padding: 6px 0 0 9px;
`;

const ControlScroll = styled.div`
  background: #3a4446;
`;

const TaskRow = styled.div`
  display: flex;
  height: 48px;
  background: linear-gradient(90deg, #031b21, #03161d 45%, #020a17 75%, #030c18);
`;

const TaskItem = styled.div<{ $w: number; $line?: number; $gap?: number; $active?: boolean }>`
  display: flex;
  align-items: center;
  justify-content: center;
  flex: none;
  width: ${({ $w }) => $w}px;
  margin-left: ${({ $gap = 0 }) => $gap}px;
  background:
    linear-gradient(#79b8e8, #79b8e8) center bottom / ${({ $line = 0 }) => $line}px 3px no-repeat,
    ${({ $active }) => ($active ? "#33474d" : "transparent")};
`;

const Tray = styled.div`
  display: flex;
  align-items: center;
  gap: 9.500px;
  margin-left: auto;

  svg:first-child {
    margin-right: 5px;
  }

  svg:nth-child(2) {
    margin-right: 2px;
  }

  svg:nth-child(4) {
    margin-right: 1px;
  }
`;

const Clock = styled.div`
  display: flex;
  flex-direction: column;
  align-items: center;
  gap: 7px;
  margin: -1px 10px 0 5px;
`;

const ShowDesktop = styled.div`
  width: 5px;
  height: 46px;
  margin-left: 14px;
  border-left: 1px solid #6d7880;
`;

const Cursor = styled.svg`
  position: absolute;
  left: 875px;
  top: 125px;
`;
